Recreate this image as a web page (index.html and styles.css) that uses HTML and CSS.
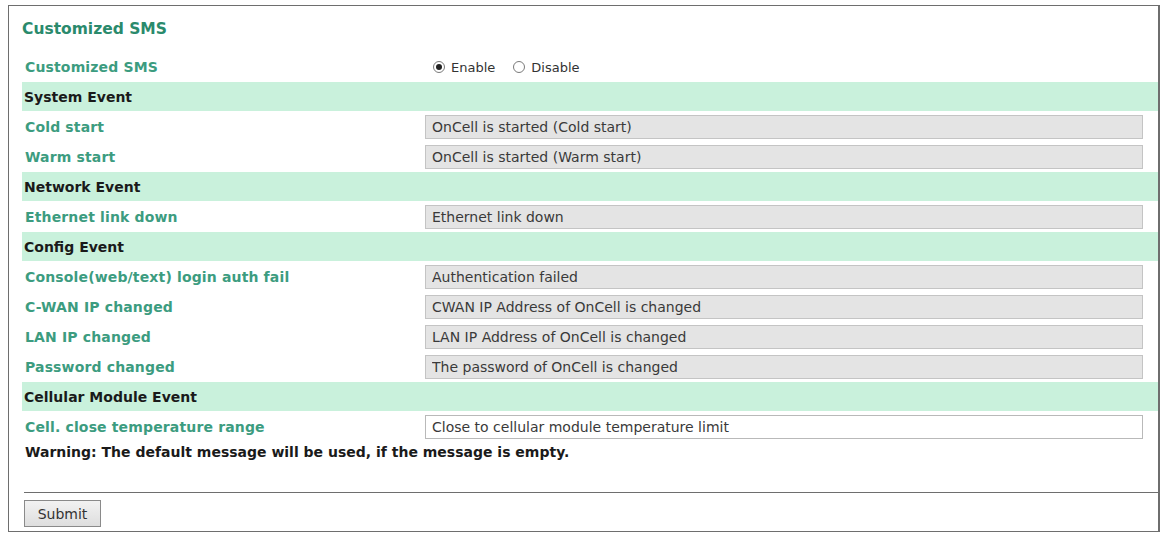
FILE: index.html
```html
<!DOCTYPE html>
<html>
<head>
<meta charset="utf-8">
<title>Customized SMS</title>
<link rel="stylesheet" href="styles.css">
</head>
<body>
<form class="frame">
  <div class="title">Customized SMS</div>

  <div class="row">
    <div class="label">Customized SMS</div>
    <div class="field radios">
      <label class="opt"><input type="radio" name="sms" checked><span>Enable</span></label>
      <label class="opt"><input type="radio" name="sms"><span>Disable</span></label>
    </div>
  </div>

  <div class="row band">System Event</div>
  <div class="row">
    <div class="label">Cold start</div>
    <div class="field"><input class="msg ro" type="text" value="OnCell is started (Cold start)" readonly></div>
  </div>
  <div class="row">
    <div class="label">Warm start</div>
    <div class="field"><input class="msg ro" type="text" value="OnCell is started (Warm start)" readonly></div>
  </div>

  <div class="row band">Network Event</div>
  <div class="row">
    <div class="label">Ethernet link down</div>
    <div class="field"><input class="msg ro" type="text" value="Ethernet link down" readonly></div>
  </div>

  <div class="row band">Config Event</div>
  <div class="row">
    <div class="label">Console(web/text) login auth fail</div>
    <div class="field"><input class="msg ro" type="text" value="Authentication failed" readonly></div>
  </div>
  <div class="row">
    <div class="label">C-WAN IP changed</div>
    <div class="field"><input class="msg ro" type="text" value="CWAN IP Address of OnCell is changed" readonly></div>
  </div>
  <div class="row">
    <div class="label">LAN IP changed</div>
    <div class="field"><input class="msg ro" type="text" value="LAN IP Address of OnCell is changed" readonly></div>
  </div>
  <div class="row">
    <div class="label">Password changed</div>
    <div class="field"><input class="msg ro" type="text" value="The password of OnCell is changed" readonly></div>
  </div>

  <div class="row band">Cellular Module Event</div>
  <div class="row">
    <div class="label">Cell. close temperature range</div>
    <div class="field"><input class="msg" type="text" value="Close to cellular module temperature limit"></div>
  </div>

  <div class="warning">Warning: The default message will be used, if the message is empty.</div>

  <div class="actions">
    <button type="button" class="submit">Submit</button>
  </div>
</form>
</body>
</html>
```

FILE: styles.css
```css
html, body {
  margin: 0;
  padding: 0;
  background: #ffffff;
}

body {
  font-family: "DejaVu Sans", Verdana, sans-serif;
  font-size: 14px;
  color: #222;
}

.frame {
  margin: 5px 0 0 8px;
  width: 1152px;
  height: 527px;
  box-sizing: border-box;
  border: 1px solid #6e6e6e;
  border-right-width: 2px;
  padding-left: 13px;
  display: flex;
  flex-direction: column;
}

.title {
  height: 46px;
  display: flex;
  align-items: center;
  font-weight: bold;
  font-size: 15.5px;
  color: #2a8a6c;
}

.row {
  height: 30px;
  display: flex;
  align-items: center;
  flex: none;
}

.label {
  width: 403px;
  flex: none;
  padding-left: 3px;
  box-sizing: border-box;
  font-weight: bold;
  letter-spacing: 0.15px;
  color: #3c9c80;
}

.field {
  width: 718px;
  display: flex;
  align-items: center;
}

.band {
  height: 29px;
  margin-bottom: 1px;
  background: #c9f1dc;
  padding-left: 2px;
  font-weight: bold;
  color: #1a1a1a;
}

.msg {
  width: 718px;
  height: 24px;
  box-sizing: border-box;
  margin: 0;
  padding: 0 6px;
  border: 1px solid #b9b9b9;
  background: #ffffff;
  font-family: "DejaVu Sans", Verdana, sans-serif;
  font-size: 14px;
  color: #3a3a3a;
  outline: none;
}

.msg.ro {
  background: #e4e4e4;
  border-color: #c4c4c4;
}

.radios {
  gap: 18px;
  padding-left: 8px;
}

.opt {
  display: flex;
  align-items: center;
  gap: 6px;
  font-size: 13px;
  color: #333;
}

.opt input {
  appearance: none;
  -webkit-appearance: none;
  width: 12px;
  height: 12px;
  margin: 0;
  border: 1px solid #7a7a7a;
  border-radius: 50%;
  background: #fff;
  display: grid;
  place-items: center;
}

.opt input:checked::after {
  content: "";
  width: 6px;
  height: 6px;
  border-radius: 50%;
  background: #222;
}

.warning {
  height: 20px;
  display: flex;
  align-items: center;
  padding-left: 3px;
  font-weight: bold;
  color: #1a1a1a;
}

.actions {
  margin-top: 30px;
  margin-left: 2px;
  border-top: 1px solid #6e6e6e;
  padding-top: 7px;
}

.submit {
  width: 77px;
  height: 27px;
  border: 1px solid #8a8a8a;
  background: linear-gradient(#f2f2f2, #dedede);
  font-family: "DejaVu Sans", Verdana, sans-serif;
  font-size: 14px;
  color: #333;
  padding: 0;
}
```
